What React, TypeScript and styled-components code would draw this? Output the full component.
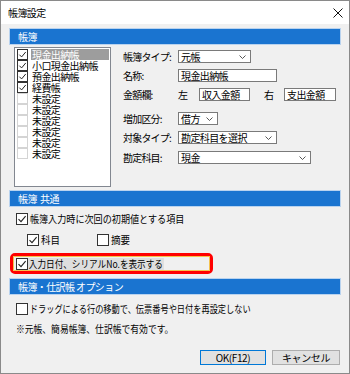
import styled, {createGlobalStyle} from "styled-components";
import {FC, ReactNode} from "react";

const GlobalStyles = createGlobalStyle`
  html, body {
    margin: 0;
    padding: 0;
    background: #fff;
  }

  body {
    font-family: "Noto Sans CJK JP", "Noto Sans", sans-serif;
    font-size: 10px;
    color: #000;
  }
`;

const Window = styled.div`
  width: 350px;
  height: 374px;
  box-sizing: border-box;
  border: 1px solid #8a8a8a;
  background: #f0f0f0;
  display: flex;
  flex-direction: column;
`;

const TitleBar = styled.div`
  height: 23px;
  background: #fff;
  display: flex;
  align-items: center;
  justify-content: space-between;
  padding: 0 6px 0 7px;
  letter-spacing: -0.6px;
`;

const Content = styled.div`
  flex-grow: 1;
  display: flex;
  flex-direction: column;
  padding: 0 9px 8px 9px;
`;

const SectionHeader = styled.div<{ $mt: number }>`
  margin-top: ${p => p.$mt}px;
  height: 15px;
  line-height: 15px;
  background: #1a74d0;
  box-shadow: 0 0 0 1px #b9d3ef;
  color: #fff;
  padding-left: 8px;
  letter-spacing: -0.6px;
`;

// Meiryo UI is narrower than Noto; squeeze long lines to its width
const Squeeze = styled.span<{ $sx: number; $bg?: string }>`
  display: inline-block;
  white-space: nowrap;
  transform: scaleX(${p => p.$sx});
  transform-origin: left center;
  background: ${p => p.$bg ?? "transparent"};
  padding: 0 1px;
`;

const LedgerArea = styled.div`
  display: flex;
  gap: 12px;
  margin: 3px 0 0 4px;
`;

const ListBox = styled.div`
  width: 97px;
  height: 140px;
  box-sizing: border-box;
  border: 1px solid #828790;
  background: #fff;
  padding: 1px 0 0 2px;
`;

const ListItem = styled.div`
  height: 11px;
  display: flex;
  align-items: center;
  gap: 3px;
`;

const ListLabel = styled.span<{ $selected?: boolean }>`
  flex-grow: 1;
  margin-right: 1px;
  height: 11px;
  line-height: 11px;
  padding-left: 1px;
  letter-spacing: -0.6px;
  background: ${p => p.$selected ? "#9d9d9d" : "transparent"};
  color: ${p => p.$selected ? "#fff" : "#000"};
`;

const Box = styled.span<{ $size: number; $faint?: boolean }>`
  width: ${p => p.$size}px;
  height: ${p => p.$size}px;
  box-sizing: border-box;
  border: 1px solid ${p => p.$faint ? "#d4d4d4" : "#333"};
  background: #fff;
  display: inline-flex;
  align-items: center;
  justify-content: center;
  flex-shrink: 0;
`;

const Form = styled.div`
  padding-top: 3px;
  display: flex;
  flex-direction: column;
`;

const FormRow = styled.div<{ $mt: number }>`
  margin-top: ${p => p.$mt}px;
  height: 13px;
  display: flex;
  align-items: center;
`;

const FieldLabel = styled.span`
  width: 55px;
  letter-spacing: -0.8px;
  line-height: 13px;
`;

const SideLabel = styled.span<{ $w: number }>`
  width: ${p => p.$w}px;
  line-height: 13px;
`;

const Field = styled.div<{ $w: number }>`
  width: ${p => p.$w}px;
  height: 13px;
  box-sizing: border-box;
  border: 1px solid #7a7a7a;
  background: #fff;
  display: flex;
  align-items: center;
  justify-content: space-between;
  padding: 0 4px 0 2px;
  line-height: 11px;
  letter-spacing: -0.6px;
`;

const CheckRow = styled.div<{ $mt: number; $pl: number }>`
  margin-top: ${p => p.$mt}px;
  padding-left: ${p => p.$pl}px;
  height: 13px;
  display: flex;
  align-items: center;
`;

const CheckItem = styled.label<{ $w?: number }>`
  display: flex;
  align-items: center;
  gap: 1px;
  width: ${p => p.$w ? `${p.$w}px` : "auto"};
  line-height: 13px;
`;

const RedMark = styled.div`
  margin-top: 7px;
  width: 203px;
  height: 21px;
  box-sizing: border-box;
  border: 3px solid #ff0000;
  border-radius: 5px;
  display: flex;
`;

const FocusRow = styled.div`
  flex-grow: 1;
  border: 1px solid #f4c24d;
  display: flex;
  align-items: center;
  padding-left: 2px;
  gap: 0;
  line-height: 12px;
`;

const Note = styled.div`
  margin: 7px 0 0 5px;
  line-height: 13px;
`;

const ButtonBar = styled.div`
  margin-top: auto;
  display: flex;
  justify-content: flex-end;
  gap: 6px;
`;

const Button = styled.div<{ $default?: boolean; $w: number }>`
  width: ${p => p.$w}px;
  height: 15px;
  box-sizing: border-box;
  border: 1px solid ${p => p.$default ? "#0078d7" : "#adadad"};
  background: #e1e1e1;
  display: flex;
  align-items: center;
  justify-content: center;
  line-height: 13px;
  letter-spacing: -0.4px;
`;

const Check: FC<{ size?: number; checked?: boolean; faint?: boolean }> = ({size = 12, checked, faint}) => (
    <Box $size={size} $faint={faint}>
        {checked && <svg width={size - 2} height={size - 2} viewBox="0 0 10 10">
            <path d="M1.5 5.2 L4 7.7 L8.6 2.2" fill="none" stroke="#222" strokeWidth="1.1"/>
        </svg>}
    </Box>
);

const Chevron = () => (
    <svg width="7" height="4" viewBox="0 0 7 4">
        <path d="M0.5 0.5 L3.5 3.5 L6.5 0.5" fill="none" stroke="#444" strokeWidth="0.9"/>
    </svg>
);

const Select: FC<{ w: number; children: ReactNode }> = ({w, children}) => (
    <Field $w={w}><span>{children}</span><Chevron/></Field>
);

const ledgers = [
    {name: "現金出納帳", checked: true, selected: true},
    {name: "小口現金出納帳", checked: true},
    {name: "預金出納帳", checked: true},
    {name: "経費帳", checked: true},
    {name: "未設定"},
    {name: "未設定"},
    {name: "未設定"},
    {name: "未設定"},
    {name: "未設定"},
    {name: "未設定"},
];

const App = () => {
    return <>
        <GlobalStyles/>
        <Window>
            <TitleBar>
                <span>帳簿設定</span>
                <svg width="10" height="10" viewBox="0 0 10 10">
                    <path d="M0.5 0.5 L9.5 9.5 M9.5 0.5 L0.5 9.5" stroke="#111" strokeWidth="1"/>
                </svg>
            </TitleBar>
            <Content>
                <SectionHeader $mt={5}>帳簿</SectionHeader>
                <LedgerArea>
                    <ListBox>
                        {ledgers.map((l, i) => (
                            <ListItem key={i}>
                                <Check size={11} checked={l.checked} faint={!l.checked}/>
                                <ListLabel $selected={l.selected}>{l.name}</ListLabel>
                            </ListItem>
                        ))}
                    </ListBox>
                    <Form>
                        <FormRow $mt={0}>
                            <FieldLabel>帳簿タイプ:</FieldLabel>
                            <Select w={73}>元帳</Select>
                        </FormRow>
                        <FormRow $mt={6}>
                            <FieldLabel>名称:</FieldLabel>
                            <Field $w={99}>現金出納帳</Field>
                        </FormRow>
                        <FormRow $mt={6}>
                            <FieldLabel>金額欄:</FieldLabel>
                            <SideLabel $w={21}>左</SideLabel>
                            <Field $w={51}>収入金額</Field>
                            <SideLabel $w={14}/>
                            <SideLabel $w={20}>右</SideLabel>
                            <Field $w={52}>支出金額</Field>
                        </FormRow>
                        <FormRow $mt={11}>
                            <FieldLabel>増加区分:</FieldLabel>
                            <Select w={40}>借方</Select>
                        </FormRow>
                        <FormRow $mt={6}>
                            <FieldLabel>対象タイプ:</FieldLabel>
                            <Select w={99}>勘定科目を選択</Select>
                        </FormRow>
                        <FormRow $mt={7}>
                            <FieldLabel>勘定科目:</FieldLabel>
                            <Select w={133}>現金</Select>
                        </FormRow>
                    </Form>
                </LedgerArea>

                <SectionHeader $mt={4}>帳簿&nbsp;&nbsp;共通</SectionHeader>
                <CheckRow $mt={6} $pl={6}>
                    <CheckItem><Check checked/><Squeeze $sx={0.91}>帳簿入力時に次回の初期値とする項目</Squeeze></CheckItem>
                </CheckRow>
                <CheckRow $mt={8} $pl={17}>
                    <CheckItem $w={70}><Check checked/><Squeeze $sx={0.95}>科目</Squeeze></CheckItem>
                    <CheckItem><Check/><Squeeze $sx={0.95}>摘要</Squeeze></CheckItem>
                </CheckRow>
                <RedMark>
                    <FocusRow>
                        <Check checked/>
                        <Squeeze $sx={0.86} $bg="#dedede">入力日付、シリアルNo.を表示する</Squeeze>
                    </FocusRow>
                </RedMark>

                <SectionHeader $mt={5}>帳簿・仕訳帳 オプション</SectionHeader>
                <CheckRow $mt={8} $pl={6}>
                    <CheckItem><Check/><Squeeze $sx={0.82}>ドラッグによる行の移動で、伝票番号や日付を再設定しない</Squeeze></CheckItem>
                </CheckRow>
                <Note><Squeeze $sx={0.88}>※元帳、簡易帳簿、仕訳帳で有効です。</Squeeze></Note>

                <ButtonBar>
                    <Button $default $w={66}>OK(F12)</Button>
                    <Button $w={68}>キャンセル</Button>
                </ButtonBar>
            </Content>
        </Window>
    </>;
};

export default App;
